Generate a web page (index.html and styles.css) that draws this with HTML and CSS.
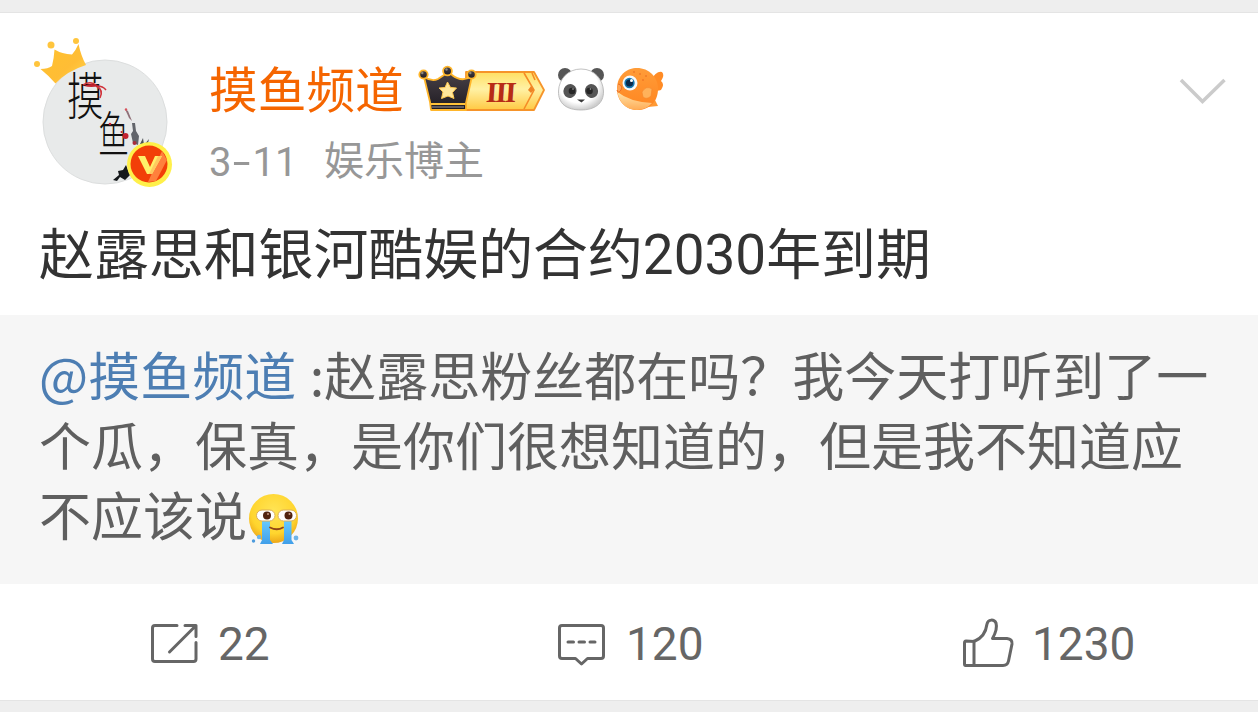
FILE: index.html
```html
<!DOCTYPE html>
<html lang="zh-CN">

<head>
 <meta charset="UTF-8">
 <meta name="viewport" content="width=device-width, initial-scale=1.0">
 <title>摸鱼频道</title>
 <link rel="stylesheet" href="styles.css">
</head>

<body>
 <article class="card">
  <header class="header">
   <svg class="avatar" viewBox="30 35 145 155">
    <defs>
     <linearGradient id="crown" x1="0" y1="0" x2="1" y2="1">
      <stop offset="0" stop-color="#ffc22e" />
      <stop offset=".6" stop-color="#ffbd35" />
      <stop offset="1" stop-color="#ffd54d" />
     </linearGradient>
    </defs>
    <circle cx="105" cy="122" r="62" fill="#e8eaea" stroke="#dcdede" />
    <!-- crown -->
    <path d="M40.500 69Q48 69 52 66Q54 58 54.500 49.500Q62 54 72 54.500Q76 50 78.500 44Q81 56 86 65Q67 71 55.500 83.500Q48 75 40.500 69Z" fill="url(#crown)" />
    <circle cx="51" cy="45" r="3.500" fill="#ffc53d" />
    <circle cx="76" cy="41" r="3" fill="#ffc53d" />
    <circle cx="37" cy="64" r="3" fill="#ffc53d" />
    <!-- name in ink -->
    <text class="ink" transform="translate(67 115) scale(.72 1)" font-size="51">摸</text>
    <text class="ink" transform="translate(98 153) scale(.62 1)" font-size="50">鱼</text>
    <path d="M83 85Q91 80 97 86Q103 86 106 90M96 86Q104 90 100 98" fill="none" stroke="#d0333b" stroke-width="1.500" />
    <path d="M84 86Q92 82 99 86Q91 88 84 86Z" fill="#c3232f" />
    <circle cx="125.500" cy="136" r="3" fill="#c3232f" />
    <circle cx="110" cy="124" r="1.300" fill="#c3232f" />
    <circle cx="121.500" cy="132" r="1" fill="#c3232f" />
    <!-- fish -->
    <path d="M125 109L128 111L132 121L129 118Z" fill="#8f7078" />
    <path d="M132 123L135 123L136 131L139 136L138 145L133 143L131 134L133 131Z" fill="#62656b" />
    <path d="M140 144L143 138L144 145L149 139L147 147Z" fill="#4e5257" />
    <circle cx="134.500" cy="143" r="2" fill="#a92d3b" />
    <circle cx="126" cy="109.500" r="1.200" fill="#d7525c" />
    <path d="M113 180L119 175L118 171L123 170L126 165L130 175L125 180L120 177L117 181Z" fill="#15181b" />
    <!-- verified mark -->
    <circle cx="149.500" cy="164.500" r="22.500" fill="#fff04a" />
    <circle cx="149" cy="164" r="18.500" fill="#f23f08" />
    <path d="M162 151L167 160L156 181L148 182Z" fill="#ff803c" />
    <path d="M138 156H145L150 167L155 156H162L152 174H147Z" fill="#fff06a" />
    <path d="M158 156H162L152 174H149Z" fill="#ffc95f" />
   </svg>

   <div class="author">
    <div class="name-row">
     <span class="name">摸鱼频道</span>
     <svg class="vip" viewBox="418 65 128 48">
      <defs>
       <linearGradient id="gold" x1="0" y1="0" x2="0" y2="1">
        <stop offset="0" stop-color="#ffdf63" />
        <stop offset=".45" stop-color="#fff1a4" />
        <stop offset="1" stop-color="#ffc943" />
       </linearGradient>
       <linearGradient id="black" x1="0" y1="0" x2="0" y2="1">
        <stop offset="0" stop-color="#4a4349" />
        <stop offset="1" stop-color="#1f1b22" />
       </linearGradient>
      </defs>
      <path d="M466 72H534L544 90L534 110H466Z" fill="url(#gold)" stroke="#f6942a" stroke-width="1.800" stroke-linejoin="round" />
      <path d="M524 73L534 90L524 109M532 73L535 80" fill="none" stroke="#f58b26" stroke-width="1.600" />
      <path d="M531 86L534 90L531 93L528 90Z" fill="#ed8425" />
      <text class="level" transform="translate(485.500 101.500) skewX(-4)">III</text>
      <g stroke="#ffb62b" stroke-width="1.800" stroke-linejoin="round" fill="url(#black)">
       <path d="M424 77Q432 82 438 79L444 75L448 70L452 75Q462 83 472 76L466 103V110H431L430 102Z" />
       <circle cx="423.500" cy="74.500" r="4.200" />
       <circle cx="447.500" cy="71" r="4.400" />
       <circle cx="471.500" cy="74.500" r="4.200" />
      </g>
      <path d="M431 104H465" stroke="#ffc23a" stroke-width="1.800" />
      <path d="M432 107H464" stroke="#615c61" stroke-width="2" />
      <circle cx="422.300" cy="73" r="1.200" fill="#8d8980" />
      <circle cx="446.500" cy="69.500" r="1.200" fill="#8d8980" />
      <circle cx="470.300" cy="73" r="1.200" fill="#8d8980" />
      <path d="M447.500 82L450.500 87.500L456.500 88L452.500 92.500L454 98.500L448 96L441.500 98.500L443 92L439 88L445 87.500Z" fill="#ffe79c" stroke="#ffc950" />
     </svg>
     <svg class="panda" viewBox="556 66 50 46">
      <defs>
       <radialGradient id="fur" cx=".45" cy=".4" r=".6">
        <stop offset=".7" stop-color="#fff" />
        <stop offset="1" stop-color="#cecece" />
       </radialGradient>
      </defs>
      <circle cx="565" cy="75" r="7" fill="#565656" />
      <circle cx="597" cy="75" r="7" fill="#565656" />
      <path d="M581 69C595 69 603 80 603.500 91C604 104 594 110 581 110C567 110 558 104 558.500 91C559 79 568 69 581 69Z" fill="url(#fur)" stroke="#b3b3b3" stroke-width=".8" />
      <ellipse cx="570" cy="91" rx="6.500" ry="7" transform="rotate(25 570 91)" fill="#555" />
      <ellipse cx="591.500" cy="91" rx="6.500" ry="7" transform="rotate(-25 591.500 91)" fill="#555" />
      <circle cx="572" cy="91" r="3.300" fill="#262626" />
      <circle cx="589.500" cy="91" r="3.300" fill="#262626" />
      <circle cx="573" cy="89" r=".8" fill="#aaa" />
      <circle cx="590.500" cy="89" r=".8" fill="#aaa" />
      <path d="M577 99.500H585L581.500 102.500Z" fill="#393939" />
     </svg>
     <svg class="puffer" viewBox="616 66 50 46">
      <defs>
       <linearGradient id="orange" x1="0" y1="0" x2="0" y2="1">
        <stop offset="0" stop-color="#ff9c38" />
        <stop offset="1" stop-color="#ff8520" />
       </linearGradient>
       <linearGradient id="belly" x1="0" y1="0" x2="0" y2="1">
        <stop offset="0" stop-color="#ffe3a8" />
        <stop offset="1" stop-color="#ffac56" />
       </linearGradient>
      </defs>
      <path d="M650 81Q657 70 662 72Q665 75 661 81Q665 84 661 90Q655 92 650 88Z" fill="#ff8b25" />
      <path d="M648 103L655 100L658 106L648 107Z" fill="#ff9a35" />
      <path d="M617 89C617 75 627 68 637 68C649 68 658 77 658 89C658 102 649 110 637 110C626 110 617 101 617 89Z" fill="url(#orange)" />
      <path d="M617.500 92Q630 102 652 103Q646 110 637 110C627 110 619 103 617.500 92Z" fill="url(#belly)" />
      <path d="M642 92Q646 85 652 89L651 96Q647 100 643 97Z" fill="#ffb25a" stroke="#f5872b" stroke-width=".6" />
      <circle cx="630" cy="83" r="7.500" fill="#f5fafc" />
      <circle cx="629.500" cy="83" r="5.200" fill="#1677af" />
      <circle cx="629.500" cy="83" r="3.600" fill="#092a4c" />
      <circle cx="631.500" cy="80.500" r="1.500" fill="#fff" />
      <path d="M618 84Q623 85 621 90Q618 94 617 90" fill="#ffa457" stroke="#ec6f22" />
      <g fill="#e5681f">
       <circle cx="640" cy="74" r=".8" />
       <circle cx="646" cy="76" r=".8" />
       <circle cx="643" cy="80" r=".8" />
       <circle cx="634" cy="72" r=".8" />
      </g>
     </svg>
    </div>
    <div class="meta"><span class="date">3<span class="dash">-</span>11</span><span>娱乐博主</span></div>
   </div>

   <svg class="more" viewBox="1178 74 50 34">
    <path d="M1181 80L1202.500 101.500L1224.500 80" fill="none" stroke="#cbcbcb" stroke-width="3.500" />
   </svg>
  </header>

  <p class="post">赵露思和银河酷娱的合约2030年到期</p>

  <div class="quote">
   <p class="quote-text"><a class="mention">@摸鱼频道</a> :赵露思粉丝都在吗？我今天打听到了一<br>个瓜，保真，是你们很想知道的，但是我不知道应<br>不应该说<svg class="emoji" viewBox="248 492 54 56">
     <defs>
      <radialGradient id="face" cx=".5" cy=".35" r=".65">
       <stop offset="0" stop-color="#ffe455" />
       <stop offset=".7" stop-color="#ffd52e" />
       <stop offset="1" stop-color="#eda719" />
      </radialGradient>
      <linearGradient id="tear" x1="0" y1="0" x2="0" y2="1">
       <stop offset="0" stop-color="#67cbff" />
       <stop offset="1" stop-color="#419fe9" />
      </linearGradient>
     </defs>
     <circle cx="274.500" cy="518.500" r="24.500" fill="url(#face)" />
     <path d="M263 520H271V540L274 544H261L263 540Z" fill="url(#tear)" />
     <path d="M285 520H292.500V540L295 544H283L285 540Z" fill="url(#tear)" />
     <rect x="257.500" y="510" width="18.500" height="11" rx="5.500" fill="#fff" stroke="#dcae54" />
     <rect x="279" y="510" width="18.500" height="11" rx="5.500" fill="#fff" stroke="#dcae54" />
     <circle cx="268" cy="515.500" r="4" fill="#51230f" />
     <circle cx="289.500" cy="515.500" r="4" fill="#51230f" />
     <circle cx="269" cy="514" r="1" fill="#c89a85" />
     <circle cx="290.500" cy="514" r="1" fill="#c89a85" />
     <path d="M271 527.500Q278 531 284 527.500" fill="none" stroke="#914617" stroke-width="1.800" stroke-linecap="round" />
     <circle cx="260" cy="537" r="2.200" fill="#6db4e9" />
     <circle cx="254.500" cy="541" r="1.700" fill="#4c9bdd" />
     <circle cx="297" cy="538" r="2.400" fill="#6db4e9" />
    </svg></p>
  </div>

  <footer class="actions">
   <div class="action share">
    <svg class="icon" viewBox="148 616 54 50">
     <path d="M177 624.500H155Q152.500 624.500 152.500 627V658Q152.500 660.500 155 660.500H193.500Q196 660.500 196 658V641.500M185 624.500H196V635.500M195 625.500L169.500 651" />
    </svg>
    <span class="count">22</span>
   </div>
   <div class="action">
    <svg class="icon" viewBox="554 616 54 50">
     <path d="M562 624.500H601Q603.500 624.500 603.500 627V655Q603.500 657.500 601 657.500H587.500L581.500 663L575.500 657.500H562Q559.500 657.500 559.500 655V627Q559.500 624.500 562 624.500Z" />
     <path d="M568 641H573.500M579 641H584.500M590 641H595" />
    </svg>
    <span class="count">120</span>
   </div>
   <div class="action">
    <svg class="icon" viewBox="960 616 54 50">
     <path d="M974 640.500C983 637 986 631 987 623C988 618 994 618 996 622C997.500 627 995 633 992.500 637.500H1007Q1012.500 638 1012 643L1008.500 660Q1007.500 664.500 1003 664.500H965.500Q964.500 664.500 964.500 663V642Q964.500 640 966 640ZM974 640V664" />
    </svg>
    <span class="count">1230</span>
   </div>
  </footer>
 </article>
</body>

</html>
```
FILE: styles.css
```css
* {
 box-sizing: border-box;
}

body {
 margin: 0;
 height: 712px;
 padding: 12px 0;
 overflow: hidden;
 background-color: #eee;
 font-family: "Noto Sans CJK SC", sans-serif;
}

p {
 margin: 0;
}

svg {
 display: block;
 flex-shrink: 0;
}

.card {
 height: 689px;
 display: flex;
 flex-direction: column;
 background-color: #fff;
 border-top: 1px solid #e4e4e4;
 border-bottom: 1px solid #e4e4e4;
}

.header {
 display: flex;
 height: 192px;
 padding: 22px 30px 0;
}

.avatar {
 width: 145px;
 height: 155px;
}

.ink {
 font-weight: 300;
 fill: #111;
}

.author {
 margin-left: 34px;
 padding-top: 20px;
 flex: 1;
}

.name-row {
 display: flex;
 align-items: center;
 height: 68px;
}

.name {
 width: 209px;
 padding-bottom: 3px;
 font-size: 48.7px;
 line-height: 65px;
 white-space: nowrap;
 color: #f56500;
}

.vip {
 width: 128px;
 height: 48px;
}

.level {
 font-family: "Liberation Serif", serif;
 font-size: 29px;
 font-weight: bold;
 letter-spacing: -1.8px;
 fill: #b72b16;
}

.panda,
.puffer {
 width: 50px;
 height: 46px;
 margin-left: 10px;
}

.meta {
 display: flex;
 height: 60px;
 margin-top: 5px;
 font-size: 40px;
 line-height: 60px;
 color: #979797;
}

.date {
 width: 115px;
 padding-top: 5px;
 font-family: Roboto, sans-serif;
}

.dash {
 display: inline-block;
 margin: 0 5px;
 transform: scaleX(1.6);
}

.more {
 width: 50px;
 height: 34px;
 margin-top: 39px;
}

.post {
 height: 110px;
 padding: 15px 39px 0;
 font-family: Roboto, "Noto Sans CJK SC", sans-serif;
 font-size: 54.9px;
 line-height: 70px;
 white-space: nowrap;
 color: #333;
}

.quote {
 height: 269px;
 padding: 24px 39px 0;
 background-color: #f6f6f6;
}

.quote-text {
 font-size: 52px;
 line-height: 70px;
 white-space: nowrap;
 color: #5f5f5f;
}

.mention {
 margin-right: 2px;
 color: #4d7eb3;
}

.emoji {
 display: inline-block;
 width: 54px;
 height: 56px;
 vertical-align: -12px;
}

.actions {
 flex: 1;
 display: grid;
 grid-template-columns: 406px 406px 1fr;
}

.action {
 display: flex;
 align-items: center;
 gap: 18px;
 padding-left: 148px;
}

.share {
 gap: 16px;
}

.count {
 padding-top: 4px;
 font-family: Roboto, sans-serif;
 font-size: 46px;
 color: #666;
}

.icon {
 width: 54px;
 height: 50px;
 fill: none;
 stroke: #666;
 stroke-width: 3;
 stroke-linecap: round;
 stroke-linejoin: round;
}
```
